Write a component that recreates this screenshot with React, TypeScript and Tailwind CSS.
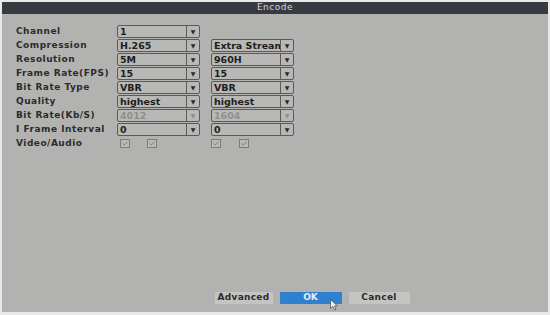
import React from 'react';

type Field = { value: string; disabled?: boolean };
type Row = { label: string; a?: Field; b?: Field; checks?: boolean };

const rows: Row[] = [
  { label: 'Channel', a: { value: '1' } },
  { label: 'Compression', a: { value: 'H.265' }, b: { value: 'Extra Stream' } },
  { label: 'Resolution', a: { value: '5M' }, b: { value: '960H' } },
  { label: 'Frame Rate(FPS)', a: { value: '15' }, b: { value: '15' } },
  { label: 'Bit Rate Type', a: { value: 'VBR' }, b: { value: 'VBR' } },
  { label: 'Quality', a: { value: 'highest' }, b: { value: 'highest' } },
  { label: 'Bit Rate(Kb/S)', a: { value: '4012', disabled: true }, b: { value: '1604', disabled: true } },
  { label: 'I Frame Interval', a: { value: '0' }, b: { value: '0' } },
  { label: 'Video/Audio', checks: true },
];

function Select({ value, disabled }: Field) {
  return (
    <div className="flex h-[13px] w-[83px] items-stretch rounded-[2px] border border-[#5a5b59] bg-[#b8b9b7]">
      <div className={`flex-1 overflow-hidden whitespace-nowrap pl-[2px] text-[9.5px] font-semibold leading-[11px] ${disabled ? 'text-[#8e8f8d]' : 'text-[#1e1e1e]'}`}>
        {value}
      </div>
      <div className={`flex w-[13px] items-center justify-center border-l border-[#5a5b59] text-[6px] ${disabled ? 'text-[#8e8f8d]' : 'text-[#2a2a2a]'}`}>
        ▼
      </div>
    </div>
  );
}

function Check() {
  return (
    <div className="flex h-[9px] w-[10px] items-center justify-center border border-[#7d7e7c] bg-[#b9bab8]">
      <svg width="6" height="5" viewBox="0 0 6 5">
        <path d="M0.5 2.5 L2.3 4 L5.5 0.8" fill="none" stroke="#7d7e7c" strokeWidth="1" />
      </svg>
    </div>
  );
}

export default function App() {
  return (
    <div className="h-[315px] w-[550px] bg-[#e9e9e9] pl-[2px] pr-[2px] pt-[2px] pb-[3px]" style={{ fontFamily: '"DejaVu Sans", sans-serif' }}>
      <div className="flex h-full flex-col bg-[#b2b3b1]">
        <div className="flex h-[12px] items-center justify-center bg-[#373b41] text-[9px] tracking-[0.5px] text-[#d4d5d6]">
          Encode
        </div>

        <div className="flex flex-col gap-[1px] pl-[14px] pt-[11px]">
          {rows.map((r) => (
            <div key={r.label} className="flex h-[13px] items-center">
              <div className="w-[101px] whitespace-nowrap text-[9px] font-bold tracking-[0.5px] text-[#2b2b2b]">{r.label}</div>
              {r.checks ? (
                <div className="flex items-center">
                  <div className="ml-[3px] flex gap-[17px]"><Check /><Check /></div>
                  <div className="ml-[54px] flex gap-[18px]"><Check /><Check /></div>
                </div>
              ) : (
                <div className="flex gap-[11px]">
                  {r.a && <Select {...r.a} />}
                  {r.b && <Select {...r.b} />}
                </div>
              )}
            </div>
          ))}
        </div>

        <div className="flex-1" />

        <div className="relative mb-[8px] flex justify-center gap-[7px] pl-[74px]">
          <div className="flex h-[12px] w-[58px] items-center justify-center bg-[#c4c5c3] text-[9px] font-bold tracking-[0.3px] text-[#2b2b2b]">Advanced</div>
          <div className="flex h-[12px] w-[62px] items-center justify-center rounded-[1px] bg-[#2f80cf] text-[9px] font-bold text-[#e6eef8]">OK</div>
          <div className="flex h-[12px] w-[61px] items-center justify-center bg-[#c4c5c3] text-[9px] font-bold tracking-[0.3px] text-[#2b2b2b]">Cancel</div>
          <svg className="absolute left-[328px] top-[7px]" width="9" height="12" viewBox="0 0 9 12">
            <path d="M0.5 0.5 L0.5 9.5 L2.8 7.4 L4.5 11 L6 10.3 L4.4 6.9 L7.5 6.9 Z" fill="#f2f2f2" stroke="#555" strokeWidth="0.8" />
          </svg>
        </div>
      </div>
    </div>
  );
}
